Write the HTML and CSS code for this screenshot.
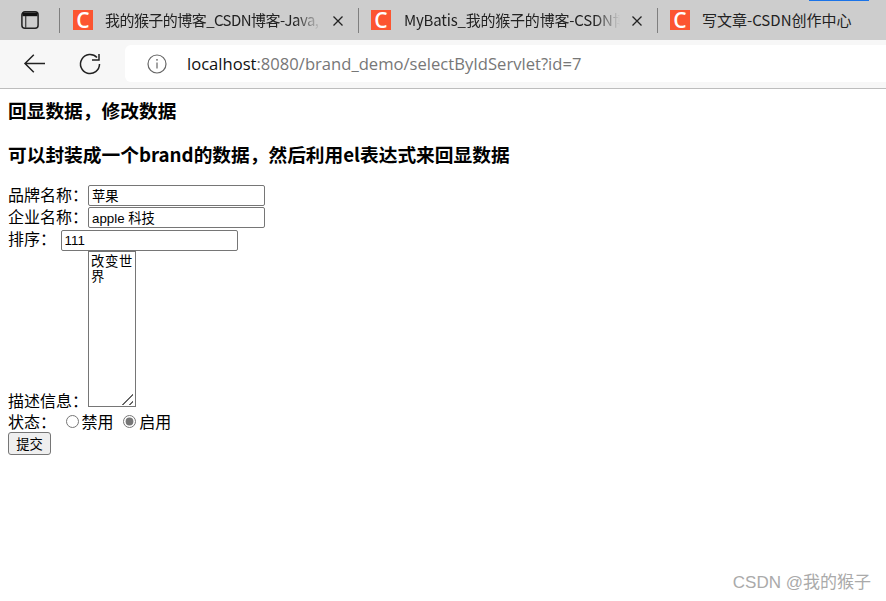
FILE: index.html
```html
<!DOCTYPE html>
<html lang="zh">
<head>
<meta charset="utf-8">
<title>回显数据</title>
<link rel="stylesheet" href="styles.css">
</head>
<body>
<header class="browser">
  <div class="tabstrip">
    <div class="accent"></div>
    <svg class="panel-icon" width="20" height="20" viewBox="0 0 20 20"><rect x="1.9" y="1.8" width="16.2" height="16.4" rx="3" fill="none" stroke="#222" stroke-width="1.5"/><path d="M2.5 2.5h15v3.7h-15z" fill="#111"/><path d="M5.7 6v12" stroke="#444" stroke-width="1.3"/></svg>
    <div class="sep"></div>
    <div class="tab tab-a">
      <span class="favicon">C</span>
      <span class="tab-title">我的猴子的博客_CSDN博客-Java,</span>
      <svg class="close" width="12" height="12" viewBox="0 0 12 12"><path d="M1.5 1.5l9 9M10.5 1.5l-9 9" stroke="#222" stroke-width="1.3"/></svg>
    </div>
    <div class="sep"></div>
    <div class="tab tab-b">
      <span class="favicon">C</span>
      <span class="tab-title">MyBatis_我的猴子的博客-CSDN博</span>
      <svg class="close" width="12" height="12" viewBox="0 0 12 12"><path d="M1.5 1.5l9 9M10.5 1.5l-9 9" stroke="#222" stroke-width="1.3"/></svg>
    </div>
    <div class="sep"></div>
    <div class="tab tab-c">
      <span class="favicon">C</span>
      <span class="tab-title plain">写文章-CSDN创作中心</span>
    </div>
  </div>
  <div class="toolbar">
    <svg class="nav-back" width="24" height="24" viewBox="0 0 24 24"><path d="M22 11.5H2.5M10.8 2.7l-8.8 8.8 8.8 8.8" fill="none" stroke="#222" stroke-width="1.5"/></svg>
    <svg class="nav-reload" width="24" height="24" viewBox="0 0 24 24"><path d="M19 5.6A9.5 9.5 0 1 0 21.5 12" fill="none" stroke="#222" stroke-width="1.5"/><path d="M21 2v6h-7" fill="none" stroke="#222" stroke-width="1.5"/></svg>
    <div class="address">
      <svg class="info" width="20" height="20" viewBox="0 0 20 20"><circle cx="10" cy="10" r="9" fill="none" stroke="#666" stroke-width="1.2"/><path d="M10 8.5v6" stroke="#666" stroke-width="1.2"/><circle cx="10" cy="5.8" r=".9" fill="#666"/></svg>
      <span class="url"><span class="host">localhost</span>:8080/brand_demo/selectByIdServlet?id=7</span>
    </div>
  </div>
</header>
<main class="page">
  <h3 class="heading">回显数据，修改数据</h3>
  <h3 class="heading">可以封装成一个brand的数据，然后利用el表达式来回显数据</h3>
  <form class="form">
    品牌名称：<input class="field" type="text" value="苹果"><br>
    企业名称：<input class="field" type="text" value="apple 科技"><br>
    排序：&nbsp;<input class="field field-short" type="text" value="111"><br>
    描述信息：<textarea class="desc">改变世界</textarea><br>
    状态：&nbsp;<input class="radio" type="radio" name="s"><span>禁用</span>
    <input class="radio" type="radio" name="s" checked><span>启用</span><br>
    <button class="submit" type="button">提交</button>
  </form>
</main>
<div class="watermark">CSDN @我的猴子</div>
</body>
</html>
```
FILE: styles.css
```css
* { box-sizing: border-box; }
html, body { margin: 0; height: 100%; overflow: hidden; background: #fff; }
body { font-family: "Noto Sans CJK SC", "Liberation Sans", sans-serif; color: #000; position: relative; }

.browser { font-family: "Noto Sans CJK SC", sans-serif; }
.tabstrip { position: relative; height: 40px; background: #cdcdcd; display: flex; align-items: center; }
.accent { position: absolute; top: 0; left: 809px; width: 60px; height: 1px; background: #1a73e8; }
.panel-icon { margin-left: 20px; flex: none; }
.sep { width: 1px; height: 25px; background: #7f7f7f; flex: none; }
.panel-icon + .sep { margin-left: 19px; }
.tab { display: flex; align-items: center; flex: none; height: 40px; overflow: hidden; }
.tab-a { width: 298px; padding-left: 13px; }
.tab-b { width: 298px; padding-left: 12px; }
.tab-c { flex: 1; padding-left: 12px; }
.favicon { width: 20px; height: 20px; flex: none; background: #fc5531; color: #fff; font: 600 21px/20px "Open Sans", sans-serif; text-align: center; }
.tab-title { font: 15px/20px "Noto Sans CJK SC", sans-serif; color: #222; white-space: nowrap; overflow: hidden; flex: 1; margin-left: 12px; -webkit-mask-image: linear-gradient(to right, #000 88%, transparent); mask-image: linear-gradient(to right, #000 88%, transparent); }
.tab-a .tab-title { letter-spacing: -.55px; }
.tab-b .tab-title { margin-left: 13px; letter-spacing: -.2px; }
.tab-title.plain { -webkit-mask-image: none; mask-image: none; margin-left: 12px; }
.close { flex: none; margin: 1px 14px 0 11px; }

.toolbar { height: 49px; background: #f7f7f7; border-bottom: 1px solid #bdbdbd; display: flex; align-items: center; padding-bottom: 1px; }
.nav-back { margin-left: 23px; flex: none; }
.nav-reload { margin-left: 31px; flex: none; }
.address { margin-left: 23px; flex: 1; height: 37px; background: #fff; border-radius: 6px 0 0 6px; display: flex; align-items: center; padding-left: 22px; }
.info { flex: none; }
.url { margin-left: 20px; font: 16.6px/24px "Open Sans", sans-serif; color: #777; white-space: nowrap; }
.host { color: #111; }

.page { padding: 0 8px; font-size: 16px; }
.heading { margin: 0; padding-top: 10px; padding-bottom: 12px; font-size: 18.72px; font-weight: 700; line-height: 22px; }
.form { font-size: 16px; line-height: 21px; margin-top: 7px; }
.field { width: 177px; height: 21px; padding: 1px 3px; border: 1px solid #767676; border-radius: 2px; font: 13.3px/17px "Liberation Sans", "Noto Sans CJK SC", sans-serif; vertical-align: baseline; }
.field-short { margin-left: 1px; }
.desc { width: 48px; height: 156px; padding: 1px 2px; border: 1px solid #767676; border-radius: 0; font: 13.3px/15px "Noto Sans CJK SC", monospace; letter-spacing: .67px; vertical-align: baseline; }
.desc::-webkit-resizer { background: linear-gradient(135deg, transparent 50%, #666 50%, #666 59%, transparent 59%, transparent 78%, #666 78%, #666 87%, transparent 87%) no-repeat right 2px bottom 1px / 11px 11px; }
.radio { margin: 3px 3px 0 6px; accent-color: #767676; vertical-align: baseline; }
.submit { height: 23px; width: 43px; padding: 0; font: 13.3px/17px "Noto Sans CJK SC", sans-serif; background: #efefef; border: 1px solid #767676; border-radius: 3px; color: #000; display: block; }
.watermark { position: absolute; right: 15px; bottom: 8px; font: 17px/20px "Liberation Sans", "Noto Sans CJK SC", sans-serif; color: #aaa; }
```
